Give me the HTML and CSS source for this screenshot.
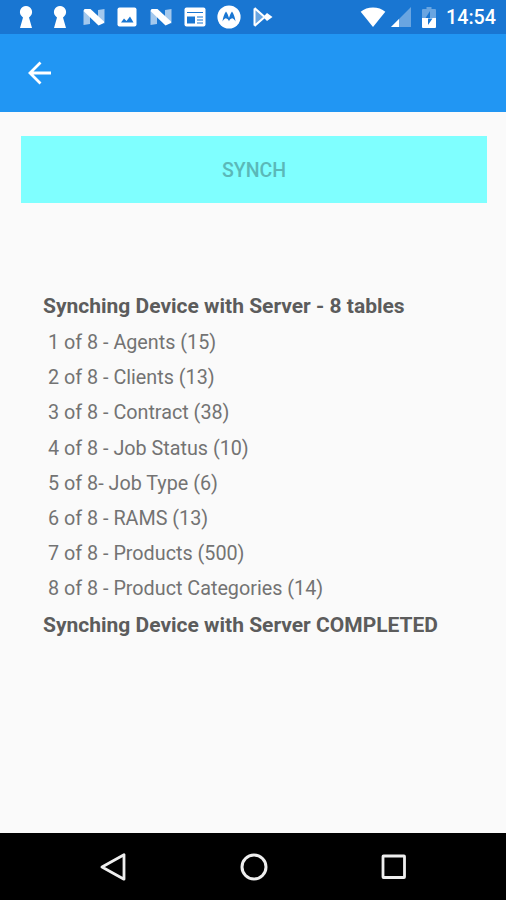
FILE: index.html
```html
<!DOCTYPE html>
<html lang="en">
<head>
    <meta charset="UTF-8">
    <meta name="viewport" content="width=device-width, initial-scale=1.0">
    <title>Synch</title>
    <link rel="stylesheet" href="styles.css">
</head>
<body>
    <div class="screen">
        <div class="status-bar">
            <div class="notifications">
                <svg width="14" height="24" viewBox="0 0 14 24"><path d="M7 1a6 6 0 0 0-4.500 10L4 12.500 1 23h12l-3-10.500 1.500-1.500A6 6 0 0 0 7 1z" fill="#fff"/></svg>
                <svg width="14" height="24" viewBox="0 0 14 24"><path d="M7 1a6 6 0 0 0-4.500 10L4 12.500 1 23h12l-3-10.500 1.500-1.500A6 6 0 0 0 7 1z" fill="#fff"/></svg>
                <svg width="22" height="18" viewBox="0 0 22 18"><path d="M.5 2.500L7 6v10l-6.500 1zM15 2l6.500-1v14.500L15 11z" fill="#fff" opacity=".6"/><path d="M1.500 1h6L21 13.500V15l-5.500 2.500L.5 3z" fill="#fff"/></svg>
                <svg width="20" height="20" viewBox="0 0 20 20"><rect x=".5" y=".5" width="19" height="19" rx="2" fill="#fff"/><path d="M4 15.500l3-4 2.500 2.500 3.500-4.500 3.500 6z" fill="#1976d2"/></svg>
                <svg width="22" height="18" viewBox="0 0 22 18"><path d="M.5 2.500L7 6v10l-6.500 1zM15 2l6.500-1v14.500L15 11z" fill="#fff" opacity=".6"/><path d="M1.500 1h6L21 13.500V15l-5.500 2.500L.5 3z" fill="#fff"/></svg>
                <svg width="22" height="20" viewBox="0 0 22 20"><rect x=".5" y=".5" width="21" height="19" rx="2" fill="#fff"/><path d="M3 5.500h16M13 10h6M13 13h6M13 16h6" stroke="#1976d2" stroke-width="1.200"/><path d="M3 9.500h8v7H3z" fill="#1976d2"/></svg>
                <svg width="24" height="24" viewBox="0 0 24 24"><circle cx="12" cy="12" r="11.600" fill="#fff"/><path d="M5.500 16.500C6 12.500 7.200 9 9 6.500c1.500 2 2.200 4 3 6.500.8-2.500 1.500-4.500 3-6.500 1.800 2.500 3 6 3.500 10-.7-1.500-1.800-2.600-3.300-3.200-1.700.4-2.700 1.500-3.200 3-.5-1.500-1.500-2.600-3.200-3-1.500.6-2.600 1.700-3.300 3.200z" fill="#1976d2"/></svg>
                <svg width="20" height="20" viewBox="0 0 20 20"><path d="M1.500 1v18L11 10z" fill="#fff" opacity=".35"/><path d="M1.500 1.500v17M1.500 1l13 11.500M1.500 19l13-11.500" fill="none" stroke="#fff" stroke-width="2"/><path d="M10.500 10l3.500-4 5.500 4-5.500 4z" fill="#fff"/></svg>
            </div>
            <div class="system">
                <svg class="wifi" width="26" height="20" viewBox="0 0 26 20"><path d="M13 20L.7 4.800C7-1 19-1 25.300 4.800z" fill="#fff"/></svg>
                <svg class="signal" width="20" height="20" viewBox="0 0 20 20"><path d="M20 0v20H0z" fill="#fff" opacity=".35"/><path d="M8 12v8H0z" fill="#fff"/></svg>
                <svg class="battery" width="14" height="21" viewBox="0 0 14 21"><path d="M4.500 0h5v2H13q1 0 1 1v9H0V3q0-1 1-1h3.500z" fill="#fff" opacity=".35"/><path d="M0 11h14v9q0 1-1 1H1q-1 0-1-1z" fill="#fff"/><path d="M8 4v7H3.500zM6 18v-6.500h4.500z" fill="#1976d2"/></svg>
                <span class="time">14:54</span>
            </div>
        </div>

        <div class="toolbar">
            <svg width="24" height="24" viewBox="0 0 24 24"><path d="M12.500 1.500L2 12l10.500 10.500M2 12h21" fill="none" stroke="#fff" stroke-width="2.800"/></svg>
        </div>

        <div class="content">
            <button class="synch-btn" disabled>SYNCH</button>

            <div class="log">
                <div class="log-title">Synching Device with Server - 8 tables</div>
                <ul>
                    <li>1 of 8 - Agents (15)</li>
                    <li>2 of 8 - Clients (13)</li>
                    <li>3 of 8 - Contract (38)</li>
                    <li>4 of 8 - Job Status (10)</li>
                    <li>5 of 8- Job Type (6)</li>
                    <li>6 of 8 - RAMS (13)</li>
                    <li>7 of 8 - Products (500)</li>
                    <li>8 of 8 - Product Categories (14)</li>
                </ul>
                <div class="log-title">Synching Device with Server COMPLETED</div>
            </div>
        </div>

        <div class="nav-bar">
            <svg width="28" height="28" viewBox="0 0 28 28"><path d="M25 1.800v24.400L3 14z" fill="none" stroke="#eee" stroke-width="2.800" stroke-linejoin="round"/></svg>
            <svg width="28" height="28" viewBox="0 0 28 28"><circle cx="14" cy="14" r="12" fill="none" stroke="#eee" stroke-width="3"/></svg>
            <svg width="28" height="28" viewBox="0 0 28 28"><rect x="3" y="3" width="21.500" height="21.500" rx=".5" fill="none" stroke="#eee" stroke-width="2.800"/></svg>
        </div>
    </div>
</body>
</html>
```

FILE: styles.css
```css
body {
    margin: 0;
    font-family: Roboto, sans-serif;
    background-color: #fafafa;
    color: #737373;
}

svg {
    display: block;
    flex-shrink: 0;
}

.screen {
    display: flex;
    flex-direction: column;
    height: 900px;
    overflow: hidden;
}

.status-bar {
    display: flex;
    justify-content: space-between;
    height: 34px;
    padding: 0 10px 0 19px;
    background-color: #1976d2;
}

.notifications {
    display: grid;
    grid-template-columns: repeat(8, 14px);
    column-gap: 19.8px;
    align-items: center;
    justify-items: center;
}

.system {
    display: flex;
    align-items: center;
}

.signal {
    margin-left: 5px;
}

.battery {
    margin-left: 11px;
}

.time {
    margin-left: 10px;
    width: 50px;
    font-size: 19.7px;
    font-weight: 500;
    line-height: 36px;
    color: #fff;
    white-space: nowrap;
    padding-top: 2px;
}

.toolbar {
    display: flex;
    align-items: center;
    height: 78px;
    padding-left: 27.5px;
    background-color: #2196f3;
}

.content {
    flex: 1;
    padding: 24px 19px 0 21px;
}

.synch-btn {
    display: block;
    width: 100%;
    height: 67px;
    padding: 2px 0 0;
    border: none;
    background-color: #7fffff;
    color: #5bb8b8;
    font-family: inherit;
    font-size: 19.5px;
    font-weight: 500;
}

.log {
    padding: 85px 0 0 22px;
}

.log-title {
    font-size: 21px;
    font-weight: bold;
    line-height: 37px;
    color: #5c5c5c;
    white-space: nowrap;
}

.log ul {
    list-style: none;
    margin: 0;
    padding: 0 0 0 5px;
}

.log li {
    font-size: 19.75px;
    line-height: 35.2px;
}

.nav-bar {
    display: flex;
    align-items: center;
    justify-content: center;
    gap: 112.5px;
    height: 67px;
    padding-left: 1px;
    background-color: #000;
}
```
